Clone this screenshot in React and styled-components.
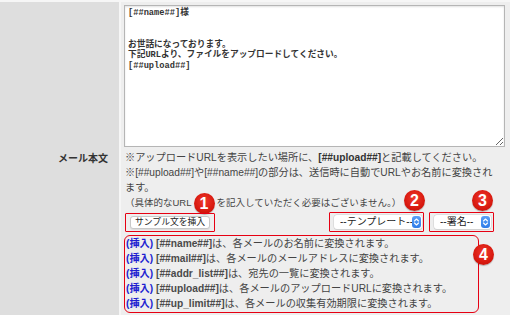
import React from "react";
import styled, { createGlobalStyle } from "styled-components";

const Global = createGlobalStyle`
  html, body { margin: 0; padding: 0; background: #eeeeee; }
  body { font-family: "Liberation Sans", "Noto Sans CJK JP", sans-serif; }
`;

const Row = styled.div`
  display: grid;
  grid-template-columns: 119px 1fr;
  column-gap: 2px;
  background: #f6f6f6;
  padding-top: 2px;
  width: 510px;
  height: 315px;
  box-sizing: border-box;
  overflow: hidden;
`;

const LabelCell = styled.div`
  background: #dedede;
  padding: 149px 11px 0 0;
  text-align: right;
  font-size: 10px;
  font-weight: bold;
  line-height: 15px;
  color: #333;
`;

const FieldCell = styled.div`
  background: #eeeeee;
  padding: 3px 3px 0 3px;
  display: flex;
  flex-direction: column;
  align-items: flex-start;
`;

const BodyArea = styled.textarea`
  width: 381px;
  height: 142px;
  box-sizing: border-box;
  margin: 0;
  padding: 2px 3px;
  border: 1px solid #b5b5b5;
  box-shadow: inset 0 1px 2px rgba(0, 0, 0, 0.12);
  background: #fff;
  font-family: "Liberation Mono", "Noto Sans CJK JP", monospace;
  font-size: 8.7px;
  font-weight: bold;
  line-height: 10.5px;
  color: #333;
  outline: none;
`;

const Help = styled.div`
  margin-top: 3px;
  padding-left: 1px;
  width: 375px;
  font-size: 10.2px;
  line-height: 15px;
  color: #444;
`;

const Small = styled.span`
  font-size: 9.5px;
`;

const Strong = styled.b`
  color: #333;
`;

const Controls = styled.div`
  display: flex;
  align-items: center;
  justify-content: space-between;
  width: 369px;
  margin-top: 2px;
  padding-left: 1px;
`;

const Marked = styled.div`
  position: relative;
  border: 1.5px solid #e60012;
  border-radius: ${(p) => (p.$round ? "6px" : "1px")};
  padding: ${(p) => p.$pad || "2px 4px"};
  display: flex;
  align-items: center;
`;

const NoteBox = styled(Marked)`
  margin-top: 3px;
  width: 355px;
  box-sizing: border-box;
`;

const Selects = styled.div`
  display: flex;
  gap: 5px;
`;

const Badge = styled.span`
  position: ${(p) => (p.$inline ? "static" : "absolute")};
  display: inline-block;
  vertical-align: middle;
  margin: ${(p) => (p.$inline ? "-4px 2px -4px 2px" : "0")};
  left: ${(p) => p.$x}px;
  top: ${(p) => p.$y}px;
  width: 21px;
  height: 21px;
  border-radius: 50%;
  background: radial-gradient(circle at 50% 40%, #f03a2e 0%, #d8190f 60%, #b80d06 100%);
  box-shadow: 0 1px 1px rgba(0, 0, 0, 0.25);
  color: #fff;
  font-family: "Liberation Sans", sans-serif;
  font-weight: bold;
  font-size: 16px;
  line-height: 21px;
  text-align: center;
  text-indent: 0;
`;

const Button = styled.button`
  margin: 0;
  height: 13px;
  padding: 0 4px;
  background: #fff;
  border: 1px solid #c8c8c8;
  border-radius: 3px;
  font-family: "Liberation Sans", "Noto Sans CJK JP", sans-serif;
  font-size: 8.8px;
  line-height: 11px;
  color: #222;
  box-shadow: 0 1px 1px rgba(0, 0, 0, 0.08);
`;

const SelectWrap = styled.div`
  display: inline-flex;
  align-items: center;
  width: ${(p) => p.$w}px;
  height: 14px;
  background: #fff;
  border-radius: 3px;
  box-shadow: 0 0 0 0.5px #cfcfcf, 0 1px 1px rgba(0, 0, 0, 0.12);
  box-sizing: border-box;
`;

const Select = styled.select`
  appearance: none;
  flex: 1;
  min-width: 0;
  border: 0;
  background: transparent;
  margin: 0;
  padding: 0 0 0 6px;
  font-family: "Liberation Sans", "Noto Sans CJK JP", sans-serif;
  font-size: 10px;
  line-height: 14px;
  height: 14px;
  color: #222;
  outline: none;
`;

const Arrow = styled.span`
  width: 9px;
  height: 12px;
  margin-right: 1px;
  border-radius: 3px;
  background: linear-gradient(#5aa0f7, #2f7ce8);
  display: flex;
  align-items: center;
  justify-content: center;
`;

const Notes = styled.div`
  font-size: 10.2px;
  line-height: 15px;
  color: #444;
`;

const Tag = styled.b`
  color: #1f1fd0;
`;

const Var = styled.b`
  color: #4a4a4a;
`;

const Chevrons = () => (
  <svg width="7" height="10" viewBox="0 0 7 10">
    <path d="M1.5 4 L3.5 2 L5.5 4 M1.5 6 L3.5 8 L5.5 6" stroke="#fff" strokeWidth="1.1" fill="none" strokeLinecap="round" strokeLinejoin="round" />
  </svg>
);

const notes = [
  ["[##name##]", "は、各メールのお名前に変換されます。"],
  ["[##mail##]", "は、各メールのメールアドレスに変換されます。"],
  ["[##addr_list##]", "は、宛先の一覧に変換されます。"],
  ["[##upload##]", "は、各メールのアップロードURLに変換されます。"],
  ["[##up_limit##]", "は、各メールの収集有効期限に変換されます。"],
];

const bodyText =
  "[##name##]様\n\n\nお世話になっております。\n下記URLより、ファイルをアップロードしてください。\n[##upload##]";

export default function App() {
  return (
    <>
      <Global />
      <Row>
        <LabelCell>メール本文</LabelCell>
        <FieldCell>
          <BodyArea defaultValue={bodyText} />
          <Help>
            ※アップロードURLを表示したい場所に、<Strong>[##upload##]</Strong>と記載してください。
            <br />
            ※[##upload##]や[##name##]の部分は、送信時に自動でURLやお名前に変換されます。
            <br />
            <Small>
              （具体的なURL<Badge $inline>1</Badge>を記入していただく必要はございません。）
            </Small>
          </Help>
          <Controls>
            <Marked $pad="2px 4px">
              <Button type="button">サンプル文を挿入</Button>
            </Marked>
            <Selects>
              <Marked $pad="2px 1px 2px 4px">
                <SelectWrap $w={88}>
                  <Select defaultValue="">
                    <option value="">--テンプレート--</option>
                  </Select>
                  <Arrow>
                    <Chevrons />
                  </Arrow>
                </SelectWrap>
                <Badge $x={74} $y={-23}>2</Badge>
              </Marked>
              <Marked $pad="2px 2px 2px 4px">
                <SelectWrap $w={57}>
                  <Select defaultValue="">
                    <option value="">--署名--</option>
                  </Select>
                  <Arrow>
                    <Chevrons />
                  </Arrow>
                </SelectWrap>
                <Badge $x={42} $y={-23}>3</Badge>
              </Marked>
            </Selects>
          </Controls>
          <NoteBox $round $pad="0 8px 1px 1px">
            <Notes>
              {notes.map(([v, t]) => (
                <div key={v}>
                  <Tag>(挿入)</Tag> <Var>{v}</Var>
                  {t}
                </div>
              ))}
            </Notes>
            <Badge $x={348} $y={8}>4</Badge>
          </NoteBox>
        </FieldCell>
      </Row>
    </>
  );
}
